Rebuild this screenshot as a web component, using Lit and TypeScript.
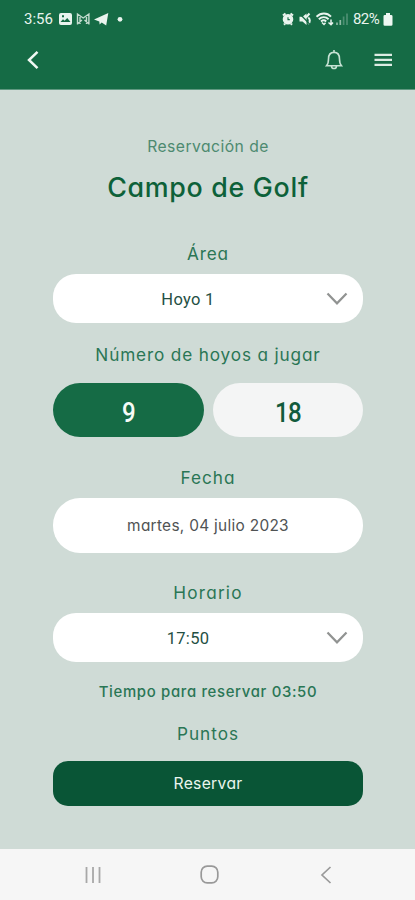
import { LitElement, html, css } from "lit";
import { customElement } from "lit/decorators.js";

const chevron = html`<svg class="chev" width="24" height="16" viewBox="0 0 24 16"><path d="M2.500 2.500 12 12.300 21.500 2.500" fill="none" stroke="#919392" stroke-width="2.200"/></svg>`;

@customElement("app-root")
export class AppRoot extends LitElement {
  static styles = css`
    :host { display: flex; flex-direction: column; height: 900px; width: 415px; overflow: hidden;
      background: #cfdbd6; font-family: Inter, "Liberation Sans", sans-serif;
      font-feature-settings: "cv11" 1; color: #2a7655; }
    * { box-sizing: border-box; }
    svg { display: block; flex: none; }
    header { height: 90px; flex: none; background: #156b45; color: #e9f4ee; border-bottom: 1px solid #5f9880; }
    .status { height: 38px; display: flex; justify-content: space-between; align-items: center;
      padding: 0 22px 0 24px; font: 15px/38px Roboto, sans-serif; }
    .group { display: flex; align-items: center; }
    .time { width: 34px; letter-spacing: 0; }
    .pct { width: 30px; margin-left: 4px; letter-spacing: -0.600px; }
    .bar { height: 43px; display: flex; align-items: center; padding: 0 23px 0 26px; }
    .push { margin-left: auto; }
    main { flex: 1; padding: 44px 52px 0 53px; display: flex; flex-direction: column; }
    .label { height: 24px; line-height: 24px; text-align: center; white-space: nowrap; font-weight: 400; font-size: 17.200px; }
    .intro { font-size: 15.700px; letter-spacing: 0.450px; color: #4d8a70; line-height: 25px; }
    h1 { margin: 15px 0 39px; height: 30px; font-size: 26.800px; line-height: 29px; font-weight: 500;
      text-align: center; letter-spacing: 0.700px; white-space: nowrap; color: #0d6139; }
    .area { letter-spacing: 0.800px; }
    .holes { margin-top: 20px; letter-spacing: 0.850px; }
    .date { margin-top: 29px; letter-spacing: 1px; }
    .hour { margin-top: 28px; letter-spacing: 1.200px; }
    .left { margin-top: 18px; font-size: 14.900px; font-weight: 500; letter-spacing: 0.670px; }
    .points { margin-top: 18px; letter-spacing: 0.950px; }
    .field { flex: none; margin-top: 8px; background: #fff; display: grid; align-items: center; justify-items: center; white-space: nowrap; }
    .select { height: 49px; border-radius: 23px; grid-template-columns: 270px 28px;
      font: 16.500px/20px Roboto, sans-serif; color: #244f43; letter-spacing: 0.300px; }
    .select span { padding-top: 2px; }
    .choices { display: grid; grid-template-columns: 151px 150px; gap: 9px; margin-top: 16px; height: 54px; flex: none; }
    .choice { height: 54px; border-radius: 27px; background: #f4f5f5; color: #125b3c; text-align: center;
      font: 500 28px/59px Roboto, sans-serif; letter-spacing: -0.800px; }
    .choice span { display: inline-block; transform: scaleX(0.860); }
    .on { background: #156b45; color: #f5fbf7; }
    .day { height: 55px; border-radius: 27px; font-size: 15.400px; line-height: 20px; padding-top: 1px; color: #505354; letter-spacing: 0.300px; }
    .submit { flex: none; margin-top: 15px; height: 45px; border-radius: 15px; background: #095536; color: #eaf5ee;
      text-align: center; font-size: 15.700px; line-height: 46px; letter-spacing: 0.300px; }
    nav { height: 51px; flex: none; background: #f6f6f6; display: flex; align-items: center; padding-left: 84px; }
    .home { margin-left: 98px; }
    .back { margin-left: 100px; }
  `;

  render() {
    return html`
      <header>
        <div class="status">
          <div class="group">
            <span class="time">3:56</span>
            <svg width="68" height="16" viewBox="58 11 68 16" fill="#e9f4ee">
              <path fill-rule="evenodd" d="M61 13h9a2 2 0 0 1 2 2v8a2 2 0 0 1-2 2h-9a2 2 0 0 1-2-2v-8a2 2 0 0 1 2-2zm-.5 9h10l-3.300-4-2.600 2.800-1.600-1.500zM62 15.300v2h2v-2z"/>
              <path d="M77.500 24.500v-10.500l5.700 4 5.700-4v10.500M77.500 24l4.500-4M89 24l-4.500-4M80 17v7M86.500 17v7" fill="none" stroke="#c3dccf" stroke-width="1.400"/>
              <path d="M94 19.400 108.300 13 106.200 25.500 101.700 22.400 99.600 24.600 99.300 21.400Z"/>
              <circle cx="120" cy="19.300" r="2.400"/>
            </svg>
          </div>
          <div class="group">
            <svg width="68" height="16" viewBox="281 11 68 16" fill="none" stroke="#e9f4ee">
              <circle cx="288" cy="19.300" r="4.500" fill="#e9f4ee" stroke-width="1.600"/>
              <path d="M283 15.500l2.500-2M293 15.500l-2.500-2M284 24.700l1-1M292 24.700l-1-1" stroke-width="2.200"/>
              <path d="M288 17.300v2.300h1.800" stroke="#156b45" stroke-width="1.100"/>
              <path d="M299.500 16.800h3l4-3.300v11.500l-4-3.500h-3z" fill="#e9f4ee" stroke="none"/>
              <path d="M309.500 13.500l-3.500 4M308.300 17.500c2 1.500 2 4.500 0 6.500" stroke-width="2"/>
              <path d="M299.500 13.500l11 11.500" stroke="#156b45" stroke-width="1.200"/>
              <path d="M316.500 16.700c4.500-4.200 10.500-4.200 14.500 0M318.800 19.200c3-2.700 7-2.700 9.800 0M321 21.500c1.800-1.500 3.600-1.500 5.200 0" stroke-width="1.900"/>
              <path d="M322 22.500l2 2 1.500-1.700M331 19.500v5M328.500 22.500l2.500 2.200 2-2.200" stroke-width="1.500"/>
              <path d="M337 25v-2.500M340.300 25v-5" stroke-width="1.700" stroke="#8db9a4"/><path d="M343.600 25v-8.500M347 25V13.500" stroke-width="1.700" stroke="#4d8f72"/>
            </svg>
            <span class="pct">82%</span>
            <svg width="10" height="13" viewBox="0 0 10 13" fill="#eef7f2"><path d="M3 0h4v2h1.200q1.300 0 1.300 1.300v8.200q0 1.300-1.300 1.300H1.800Q.5 12.800.5 11.500V3.300Q.5 2 1.800 2H3z"/></svg>
          </div>
        </div>
        <div class="bar">
          <svg width="14" height="20" viewBox="0 0 14 20"><path d="M11.500 1.800 3 10l8.500 8.200" fill="none" stroke="#f0f8f3" stroke-width="2.500"/></svg>
          <svg class="push" width="18" height="21" viewBox="0 0 18 21" fill="none" stroke="#c7e2d4" stroke-width="1.600"><path d="M1.500 16.800c1.500-1.500 2-2.800 2-6.800 0-4.300 2-6.600 5.500-6.600s5.500 2.300 5.500 6.600c0 4 .5 5.300 2 6.800zM9 3.400V1M6.500 17.300c.4 3 4.600 3 5 0"/></svg>
          <svg width="49" height="14" viewBox="-31.500 0 49 14"><path d="M0 1.800h17.500M0 6.800h17.500M0 11.800h17.500" stroke="#dcece3" stroke-width="2.200"/></svg>
        </div>
      </header>
      <main>
        <div class="label intro">Reservación de</div>
        <h1>Campo de Golf</h1>
        <div class="label area">Área</div>
        <div class="field select"><span>Hoyo 1</span>${chevron}</div>
        <div class="label holes">Número de hoyos a jugar</div>
        <div class="choices"><div class="choice on"><span>9</span></div><div class="choice"><span>18</span></div></div>
        <div class="label date">Fecha</div>
        <div class="field day">martes, 04 julio 2023</div>
        <div class="label hour">Horario</div>
        <div class="field select"><span>17:50</span>${chevron}</div>
        <div class="label left">Tiempo para reservar 03:50</div>
        <div class="label points">Puntos</div>
        <div class="submit">Reservar</div>
      </main>
      <nav>
        <svg width="18" height="18" viewBox="0 0 18 18"><path d="M2.500 1v16M9 1v16M15.500 1v16" stroke="#a8a8a8" stroke-width="1.800"/></svg>
        <svg class="home" width="19" height="19" viewBox="0 0 19 19"><rect x="1.200" y="1.200" width="16.600" height="16.600" rx="6" fill="none" stroke="#999" stroke-width="1.700"/></svg>
        <svg class="back" width="14" height="20" viewBox="0 0 14 20"><path d="M11.500 2 3 10l8.500 8" fill="none" stroke="#999" stroke-width="1.700"/></svg>
      </nav>`;
  }
}
